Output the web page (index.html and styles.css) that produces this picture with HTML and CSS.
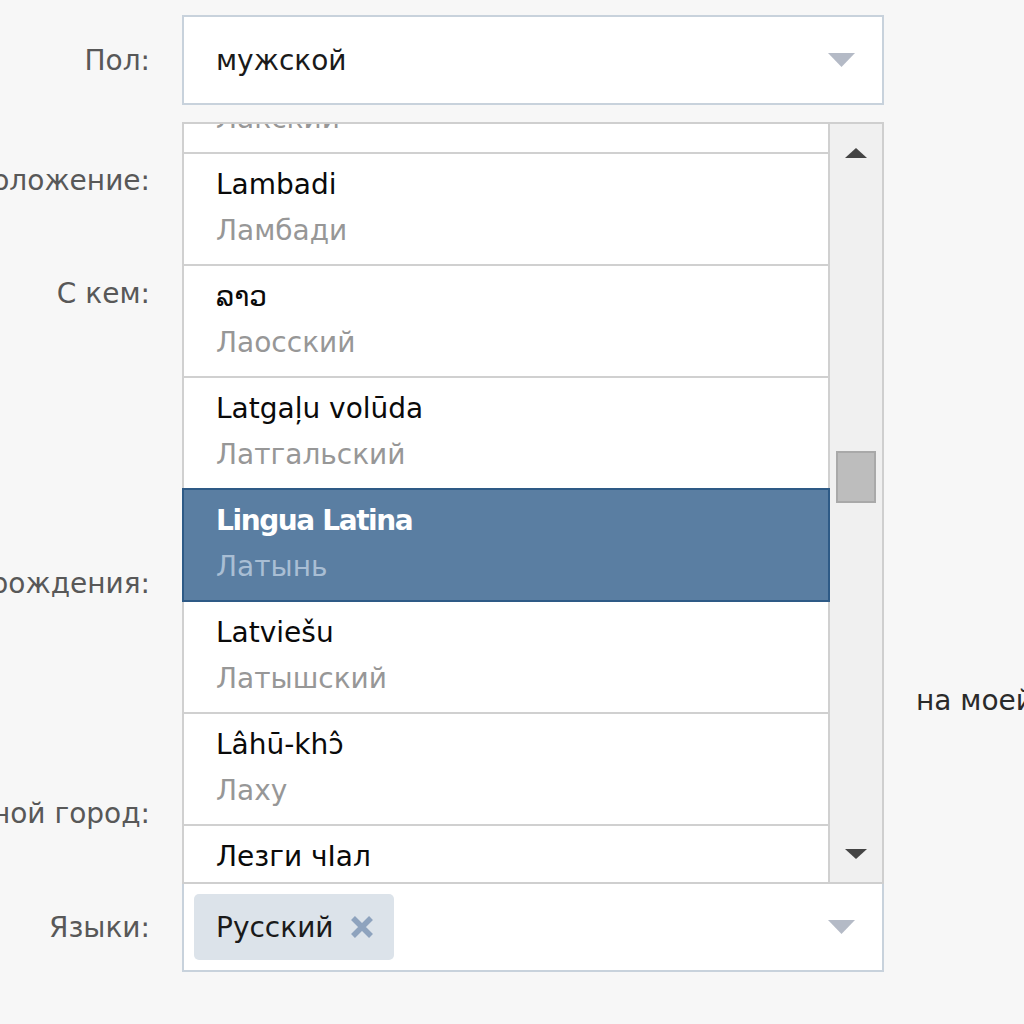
FILE: index.html
```html
<!DOCTYPE html>
<html lang="ru">
<head>
    <meta charset="UTF-8">
    <meta name="viewport" content="width=device-width, initial-scale=1.0">
    <title>Редактирование профиля</title>
    <link rel="stylesheet" href="styles.css">
</head>
<body>
    <form class="profile-form">
        <div class="row row-sex">
            <label class="row-label">Пол:</label>
            <div class="select">
                <span class="select-value">мужской</span>
                <svg class="select-arrow" width="27" height="14" viewBox="0 0 27 14"><polygon points="0,0 27,0 13.5,14"/></svg>
            </div>
        </div>

        <div class="row row-status">
            <label class="row-label">Семейное положение:</label>
            <div class="field-slot"></div>
        </div>

        <div class="row row-with">
            <label class="row-label">С кем:</label>
            <div class="field-slot"></div>
        </div>

        <div class="row row-birth">
            <label class="row-label">Дата рождения:</label>
            <div class="field-slot"></div>
        </div>

        <div class="row row-birth-show">
            <span class="row-label"></span>
            <div class="field-slot"></div>
            <span class="birth-note">на моей странице</span>
        </div>

        <div class="row row-city">
            <label class="row-label">Родной город:</label>
            <div class="field-slot"></div>
        </div>

        <div class="row row-langs">
            <label class="row-label">Языки:</label>
            <div class="select select-multi">
                <span class="token">
                    Русский
                    <svg class="token-remove" width="24" height="24" viewBox="0 0 24 24"><path d="M3 3 L21 21 M21 3 L3 21"/></svg>
                </span>
                <span class="select-value"></span>
                <svg class="select-arrow" width="27" height="14" viewBox="0 0 27 14"><polygon points="0,0 27,0 13.5,14"/></svg>

                <!-- open language menu -->
                <div class="dropdown">
                    <ul class="dropdown-list">
                        <li class="dropdown-item is-scrolled">
                            <div class="item-native">Лакку маз</div>
                            <div class="item-name">Лакский</div>
                        </li>
                        <li class="dropdown-item">
                            <div class="item-native">Lambadi</div>
                            <div class="item-name">Ламбади</div>
                        </li>
                        <li class="dropdown-item">
                            <div class="item-native">ລາວ</div>
                            <div class="item-name">Лаосский</div>
                        </li>
                        <li class="dropdown-item">
                            <div class="item-native">Latgaļu volūda</div>
                            <div class="item-name">Латгальский</div>
                        </li>
                        <li class="dropdown-item is-selected">
                            <div class="item-native">Lingua Latina</div>
                            <div class="item-name">Латынь</div>
                        </li>
                        <li class="dropdown-item">
                            <div class="item-native">Latviešu</div>
                            <div class="item-name">Латышский</div>
                        </li>
                        <li class="dropdown-item">
                            <div class="item-native">Lâhū-khɔ̂</div>
                            <div class="item-name">Лаху</div>
                        </li>
                        <li class="dropdown-item">
                            <div class="item-native">Лезги чӀал</div>
                            <div class="item-name">Лезгинский</div>
                        </li>
                    </ul>
                    <div class="scrollbar">
                        <svg class="scroll-arrow" width="22" height="10" viewBox="0 0 22 10"><polygon points="0,10 11,0 22,10"/></svg>
                        <div class="scroll-thumb"></div>
                        <svg class="scroll-arrow scroll-arrow-down" width="22" height="10" viewBox="0 0 22 10"><polygon points="0,0 22,0 11,10"/></svg>
                    </div>
                </div>
            </div>
        </div>
    </form>
</body>
</html>
```

FILE: styles.css
```css
body {
    margin: 0;
    background-color: #f7f7f7;
    font-family: "DejaVu Sans", Verdana, sans-serif;
    font-size: 28px;
    color: #222;
    overflow: hidden;
}
.profile-form {
    width: 1024px;
    height: 1024px;
    padding-top: 15px;
    box-sizing: border-box;
    overflow: hidden;
}
.row {
    display: flex;
    align-items: center;
    gap: 32px;
    height: 90px;
}
.row-status { margin-top: 30px; }
.row-with { margin-top: 23px; }
.row-birth { margin-top: 200px; }
.row-birth-show { margin-top: 27px; }
.row-city { margin-top: 23px; }
.row-langs { margin-top: 24px; }
.row-label {
    flex: none;
    width: 150px;
    display: flex;
    justify-content: flex-end;
    white-space: nowrap;
    color: #585858;
}
.field-slot {
    flex: none;
    width: 702px;
}
.birth-note {
    white-space: nowrap;
    color: #2a2a2a;
}
.select {
    flex: none;
    position: relative;
    width: 702px;
    height: 90px;
    box-sizing: border-box;
    display: flex;
    align-items: center;
    padding: 0 27px 0 32px;
    background-color: #fff;
    border: 2px solid #c8d2dc;
}
.select-value {
    flex: 1;
    color: #1a1a1a;
}
.select-arrow {
    fill: #b4bac6;
}
.select-multi {
    padding: 10px 27px 10px 10px;
}
.token {
    display: flex;
    align-items: center;
    gap: 16px;
    height: 66px;
    padding: 0 20px 0 22px;
    background-color: #dce3ea;
    border-radius: 5px;
    color: #1a1a1a;
}
.token-remove {
    stroke: #8ea3be;
    stroke-width: 5.5;
}

/* language menu */
.dropdown {
    position: absolute;
    left: -2px;
    right: -2px;
    bottom: 100%;
    height: 762px;
    box-sizing: border-box;
    display: flex;
    background-color: #fff;
    border: 2px solid #cfcfcf;
    border-left: none;
    z-index: 2;
}
.dropdown-list {
    flex: 1;
    list-style: none;
    margin: 0;
    padding: 0;
    overflow: hidden;
}
.dropdown-item {
    padding: 8px 32px 10px;
    line-height: 46px;
    border: solid #d0d0d0;
    border-width: 0 2px 2px 2px;
    white-space: nowrap;
}
.dropdown-item.is-scrolled {
    margin-top: -82px;
}
.item-native {
    color: #0a0a0a;
}
.item-name {
    color: #979797;
}
.dropdown-item.is-selected {
    position: relative;
    margin-top: -2px;
    border-top-width: 2px;
    border-color: #2e5a86;
    background-color: #5a7ea2;
}
.is-selected .item-native {
    color: #fff;
    font-weight: bold;
    letter-spacing: -1.4px;
}
.is-selected .item-name {
    color: #a9bed4;
}
.scrollbar {
    flex: none;
    width: 52px;
    display: flex;
    flex-direction: column;
    align-items: center;
    padding: 24px 0 23px;
    box-sizing: border-box;
    background-color: #f0f0f0;
}
.scroll-arrow {
    fill: #444;
}
.scroll-arrow-down {
    margin-top: auto;
}
.scroll-thumb {
    width: 40px;
    height: 52px;
    box-sizing: border-box;
    margin-top: 293px;
    background-color: #bdbdbd;
    border: 2px solid #a9a9a9;
}
```
